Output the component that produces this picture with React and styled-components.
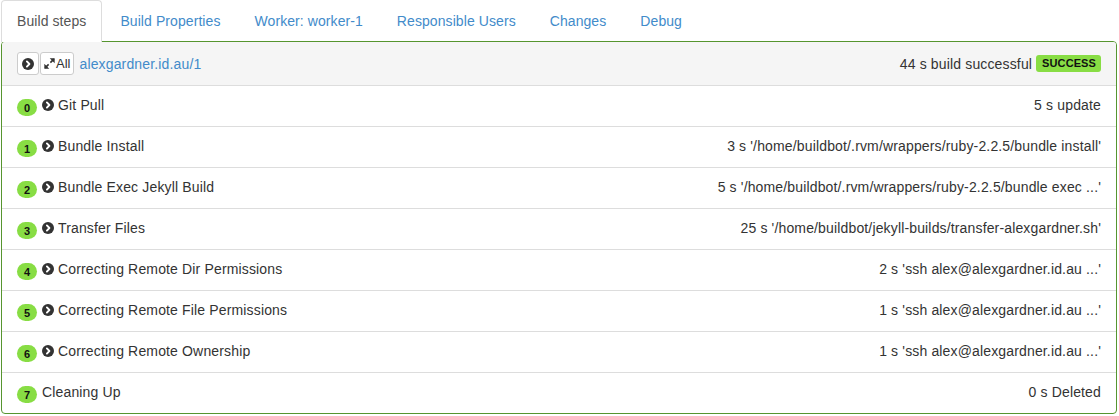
import React from 'react';
import styled, { createGlobalStyle } from 'styled-components';

const GlobalStyle = createGlobalStyle`
  body {
    margin: 0;
    background: #fff;
    font-family: "Liberation Sans", Arial, sans-serif;
    font-size: 14px;
    line-height: 20px;
    letter-spacing: 0.15px;
    color: #333;
  }
`;

const Page = styled.div`
  padding: 0 2px 0 1px;
`;

const Tabs = styled.ul`
  display: flex;
  list-style: none;
  margin: 0 0 -1px 0;
  padding: 0;
`;

const Tab = styled.li`
  margin-right: 2px;
  padding: 10px 15px 11px;
  border: 1px solid ${p => (p.active ? '#ddd' : 'transparent')};
  border-bottom: 0;
  border-radius: 4px 4px 0 0;
  background: ${p => (p.active ? '#fff' : 'transparent')};
  color: ${p => (p.active ? '#555' : '#428bca')};
  letter-spacing: 0.08px;
  cursor: pointer;
`;

const Panel = styled.div`
  border: 1px solid #56952f;
  border-radius: 4px;
  background: #fff;
  overflow: hidden;
`;

const Heading = styled.div`
  display: flex;
  align-items: center;
  justify-content: space-between;
  padding: 10px 15px;
  background: #f5f5f5;
  border-bottom: 1px solid #ddd;
`;

const Left = styled.div`
  display: flex;
  align-items: center;
`;

const SmallButton = styled.button`
  display: inline-flex;
  align-items: center;
  height: 23px;
  padding: 1px ${p => p.pad || 4}px;
  margin-right: ${p => p.gap || 0}px;
  border: 1px solid #ccc;
  border-radius: 3px;
  background: #fff;
  font-family: inherit;
  font-size: 13px;
  line-height: 18px;
  letter-spacing: 0;
  color: #333;
`;

const Link = styled.a`
  color: #428bca;
  text-decoration: none;
  margin-left: 5px;
`;

const Label = styled.span`
  display: inline-block;
  margin-left: 4px;
  padding: 3px 5px 3px 6px;
  font-size: 11px;
  line-height: 11px;
  font-weight: bold;
  color: #111;
  background: #88dd44;
  border-radius: 3px;
  letter-spacing: 0.1px;
`;

const Row = styled.div`
  display: flex;
  align-items: center;
  justify-content: space-between;
  height: 20px;
  padding: 9px 15px 11px;
  border-bottom: 1px solid #ddd;
  &:last-child {
    border-bottom: none;
  }
`;

const Badge = styled.span`
  display: inline-flex;
  align-items: center;
  justify-content: center;
  width: 20px;
  height: 17px;
  margin-top: 5px;
  margin-right: 5px;
  border-radius: 10px;
  background: #88dd44;
  color: #111;
  font-size: 11px;
  font-weight: bold;
  letter-spacing: 0;
`;

const Icon = styled.svg`
  display: block;
  margin-right: ${p => p.gap || 0}px;
`;

const ChevronCircle = ({ gap }) => (
  <Icon gap={gap} width="12" height="12" viewBox="0 0 12 12">
    <circle cx="6" cy="6" r="6" fill="#333" />
    <path d="M4.9 3.4 L7.4 6 L4.9 8.6" stroke="#fff" strokeWidth="1.9" fill="none" strokeLinecap="round" strokeLinejoin="round" />
  </Icon>
);

const Expand = () => (
  <Icon gap={1} width="11" height="11" viewBox="0 0 10 10">
    <path d="M1 9 L4.2 5.8 M9 1 L5.8 4.2" stroke="#333" strokeWidth="1.4" />
    <path d="M0.3 5.2 L0.3 9.7 L4.8 9.7 Z M9.7 4.8 L9.7 0.3 L5.2 0.3 Z" fill="#333" />
  </Icon>
);

const steps = [
  { name: 'Git Pull', info: '5 s update', logs: true },
  { name: 'Bundle Install', info: "3 s '/home/buildbot/.rvm/wrappers/ruby-2.2.5/bundle install'", logs: true },
  { name: 'Bundle Exec Jekyll Build', info: "5 s '/home/buildbot/.rvm/wrappers/ruby-2.2.5/bundle exec ...'", logs: true },
  { name: 'Transfer Files', info: "25 s '/home/buildbot/jekyll-builds/transfer-alexgardner.sh'", logs: true },
  { name: 'Correcting Remote Dir Permissions', info: "2 s 'ssh alex@alexgardner.id.au ...'", logs: true },
  { name: 'Correcting Remote File Permissions', info: "1 s 'ssh alex@alexgardner.id.au ...'", logs: true },
  { name: 'Correcting Remote Ownership', info: "1 s 'ssh alex@alexgardner.id.au ...'", logs: true },
  { name: 'Cleaning Up', info: '0 s Deleted', logs: false },
];

const tabs = ['Build steps', 'Build Properties', 'Worker: worker-1', 'Responsible Users', 'Changes', 'Debug'];

export default function App() {
  return (
    <Page>
      <GlobalStyle />
      <Tabs>
        {tabs.map((t, i) => (
          <Tab key={t} active={i === 0}>{t}</Tab>
        ))}
      </Tabs>
      <Panel>
        <Heading>
          <Left>
            <SmallButton gap={1} pad={4}><ChevronCircle /></SmallButton>
            <SmallButton pad={3}><Expand />All</SmallButton>
            <Link href="#">alexgardner.id.au/1</Link>
          </Left>
          <Left>
            44 s build successful
            <Label>SUCCESS</Label>
          </Left>
        </Heading>
        {steps.map((s, i) => (
          <Row key={s.name}>
            <Left>
              <Badge>{i}</Badge>
              {s.logs && <ChevronCircle gap={4} />}
              {s.name}
            </Left>
            <span>{s.info}</span>
          </Row>
        ))}
      </Panel>
    </Page>
  );
}
